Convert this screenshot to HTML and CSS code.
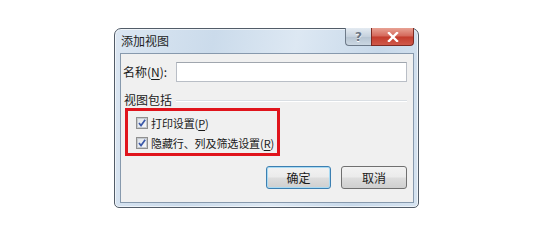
FILE: index.html
```html
<!DOCTYPE html>
<html lang="zh-CN">
<head>
<meta charset="utf-8">
<title>添加视图</title>
<link rel="stylesheet" href="styles.css">
</head>
<body>
<div class="page">
  <div class="dialog">
    <div class="titlebar">
      <span class="title">添加视图</span>
      <div class="caption-buttons">
        <div class="cap-btn help">?</div>
        <div class="cap-btn close">
          <svg width="12" height="10" viewBox="0 0 12 10"><path d="M2 1 L10 9 M10 1 L2 9" stroke="#fff" stroke-width="2.4" stroke-linecap="square"/></svg>
        </div>
      </div>
    </div>
    <div class="client">
      <div class="name-row">
        <label class="name-label">名称(<u>N</u>):</label>
        <div class="input"></div>
      </div>
      <div class="group-row">
        <span class="group-label">视图包括</span>
        <span class="group-line"></span>
      </div>
      <div class="highlight">
        <div class="check-row">
          <svg class="checkbox" width="12" height="12" viewBox="0 0 12 12">
            <defs><linearGradient id="cb" x1="0" y1="0" x2="1" y2="1"><stop offset="0" stop-color="#dfe3e8"/><stop offset="1" stop-color="#f7f8f9"/></linearGradient></defs>
            <rect x="0.5" y="0.5" width="11" height="11" fill="#fff" stroke="#8f8f8f"/>
            <rect x="1.5" y="1.5" width="9" height="9" fill="url(#cb)" stroke="#c4c9cf"/>
            <path d="M3 6 L5 8.5 L9.2 2.8" fill="none" stroke="#3a58a8" stroke-width="1.7"/>
          </svg>
          <span class="check-text">打印设置(<u>P</u>)</span>
        </div>
        <div class="check-row">
          <svg class="checkbox" width="12" height="12" viewBox="0 0 12 12">
            <rect x="0.5" y="0.5" width="11" height="11" fill="#fff" stroke="#8f8f8f"/>
            <rect x="1.5" y="1.5" width="9" height="9" fill="url(#cb)" stroke="#c4c9cf"/>
            <path d="M3 6 L5 8.5 L9.2 2.8" fill="none" stroke="#3a58a8" stroke-width="1.7"/>
          </svg>
          <span class="check-text">隐藏行、列及筛选设置(<u>R</u>)</span>
        </div>
      </div>
      <div class="button-row">
        <div class="btn default">确定</div>
        <div class="btn">取消</div>
      </div>
    </div>
  </div>
</div>
</body>
</html>
```

FILE: styles.css
```css
html, body {
  margin: 0;
  padding: 0;
  background: #ffffff;
}

body {
  font-family: "Noto Sans CJK SC", "Noto Sans", sans-serif;
  font-size: 12px;
  color: #1a1a1a;
}

.page {
  padding: 28px 0 0 114px;
}

.dialog {
  box-sizing: border-box;
  width: 305px;
  height: 180px;
  border: 1px solid #525c68;
  border-radius: 7px 7px 5px 5px;
  background: linear-gradient(100deg, #dbe6f2 0%, #cbdbeb 30%, #dde8f3 55%, #c8d9ea 80%, #d6e3f0 100%);
  box-shadow: inset 0 0 0 1px rgba(255,255,255,0.6);
  padding: 0 4px 4px 5px;
  display: flex;
  flex-direction: column;
}

.titlebar {
  height: 24px;
  display: flex;
  justify-content: space-between;
  align-items: flex-start;
}

.title {
  margin-top: 5px;
  padding-left: 1px;
  line-height: 14px;
  color: #1e1e1e;
}

.caption-buttons {
  display: flex;
  margin-top: -1px;
}

.cap-btn {
  box-sizing: border-box;
  height: 18px;
  display: flex;
  align-items: center;
  justify-content: center;
  border: 1px solid #6d7a89;
  border-top: none;
}

.help {
  width: 26px;
  border-radius: 0 0 0 4px;
  border-right: none;
  background: linear-gradient(#e4ebf2, #c5d1dd 50%, #b5c3d1 51%, #cbd7e2);
  color: #6b7683;
  font-family: "DejaVu Sans", sans-serif;
  font-size: 12px;
  font-weight: bold;
  line-height: 16px;
  text-shadow: 0 1px 0 #fff;
}

.close {
  width: 43px;
  border-radius: 0 0 4px 0;
  border-color: #7d2a22;
  background: linear-gradient(#e8a294, #d4675a 48%, #c33b2c 52%, #d0594a);
}

.client {
  box-sizing: border-box;
  width: 294px;
  height: 150px;
  border: 1px solid #8799ad;
  background: #f0f0f0;
  display: flex;
  flex-direction: column;
}

.name-row {
  margin-top: 8px;
  height: 20px;
  display: flex;
  align-items: center;
}

.name-label {
  width: 53px;
  padding-left: 2px;
  line-height: 14px;
}

.name-label u, .check-row u {
  text-decoration-thickness: 1px;
  text-underline-offset: 2px;
}

.input {
  box-sizing: border-box;
  width: 231px;
  height: 20px;
  background: #ffffff;
  border: 1px solid #b9bec6;
  border-top-color: #a0a6ae;
}

.group-row {
  margin-top: 11px;
  height: 14px;
  display: flex;
  align-items: center;
  padding-left: 3px;
  padding-right: 6px;
}

.group-label {
  line-height: 14px;
}

.group-line {
  flex: 1;
  height: 1px;
  margin-left: 4px;
  margin-top: 1px;
  background: #d9dee3;
  border-bottom: 1px solid #ffffff;
}

.highlight {
  box-sizing: border-box;
  width: 155px;
  height: 48px;
  margin-left: 4px;
  margin-top: 1px;
  border: 3px solid #e0141c;
  padding: 4px 0 0 8px;
  display: flex;
  flex-direction: column;
  gap: 4px;
}

.check-row {
  height: 16px;
  display: flex;
  align-items: center;
  line-height: 14px;
  white-space: nowrap;
}

.check-text {
  font-size: 11px;
  letter-spacing: -0.1px;
}

.checkbox {
  flex: none;
  margin-right: 3px;
}

.button-row {
  margin-top: 10px;
  display: flex;
  justify-content: flex-end;
  gap: 10px;
  padding-right: 6px;
}

.btn {
  box-sizing: border-box;
  width: 66px;
  height: 23px;
  border: 1px solid #707070;
  border-radius: 3px;
  background: linear-gradient(#f2f2f2, #ebebeb 48%, #dddddd 52%, #cfcfcf);
  display: flex;
  align-items: center;
  justify-content: center;
  line-height: 14px;
  color: #1a1a1a;
}

.btn.default {
  width: 65px;
  border-color: #3c7fb1;
  box-shadow: inset 0 0 0 1px #a8daf3;
}
```
